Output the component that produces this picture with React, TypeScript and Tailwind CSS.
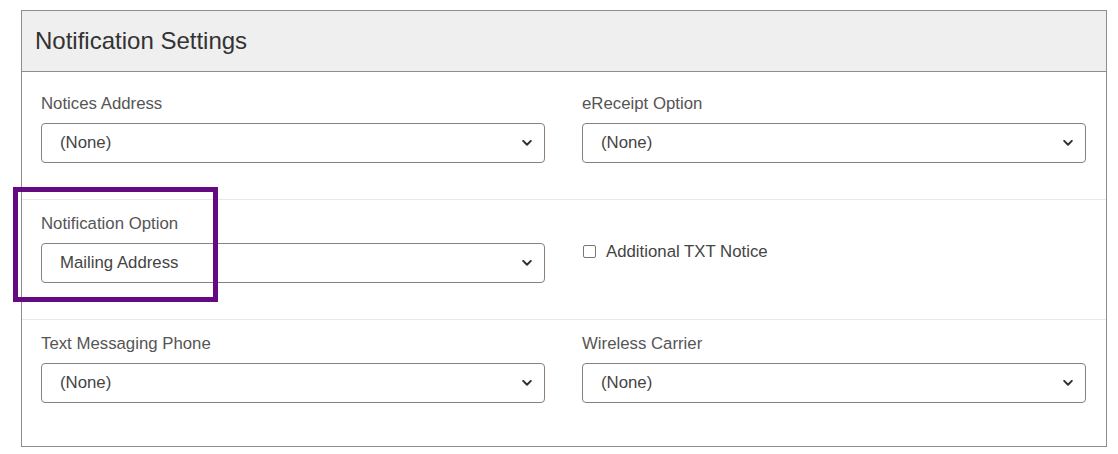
import { ReactNode } from 'react';

const font = { fontFamily: '"Liberation Sans", Arial, sans-serif' };

// 下向きのシェブロン
const Chevron = () => (
  <svg
    className="pointer-events-none absolute right-[13px] top-1/2 -translate-y-1/2"
    width="10"
    height="7"
    viewBox="0 0 10 7"
    fill="none"
  >
    <path d="M1.2 1.4 5 5.2 8.8 1.4" stroke="#333" strokeWidth="2" strokeLinecap="round" strokeLinejoin="round" />
  </svg>
);

const Select = ({ value }: { value: string }) => (
  <div className="relative h-10 w-full">
    <select
      className="h-10 w-full appearance-none rounded-[4px] border border-[#8a8077] bg-white pl-[18px] pr-8 text-[16.8px] text-[#444] outline-none"
      defaultValue={value}
    >
      <option>{value}</option>
    </select>
    <Chevron />
  </div>
);

const Field = ({ label, value }: { label: string; value: string }) => (
  <div className="flex flex-col">
    <label className="mb-[9px] h-5 text-[16.8px] leading-5 text-[#555]">{label}</label>
    <Select value={value} />
  </div>
);

const Row = ({ children, last }: { children: ReactNode; last?: boolean }) => (
  <div className={last ? 'pt-[14px] pb-[36px]' : 'border-b border-[#e9e9e9] pt-[14px] pb-[36px]'}>
    <div className="grid grid-cols-2 gap-[37px] pl-[19px] pr-[20px]">{children}</div>
  </div>
);

export default function App() {
  return (
    <div className="relative h-[454px] w-[1118px] bg-white" style={font}>
      <div className="absolute left-[21px] top-[10px] flex h-[437px] w-[1086px] flex-col border border-[#8c8c8c]">
        {/* ヘッダー */}
        <div className="flex h-[61px] items-center border-b border-[#8c8c8c] bg-[#efefef] pl-[13px]">
          <h2 className="text-[24px] leading-7 text-[#333]">Notification Settings</h2>
        </div>

        <div className="pt-2 pb-[7px]">
          <Row>
            <Field label="Notices Address" value="(None)" />
            <Field label="eReceipt Option" value="(None)" />
          </Row>
          <Row>
            <Field label="Notification Option" value="Mailing Address" />
            <div className="mt-[30px] flex h-[15px] items-center gap-[10px]">
              <input
                type="checkbox"
                className="ml-px h-[13px] w-[13px] appearance-none rounded-[2px] border border-[#767676] bg-white"
              />
              <span className="text-[16.8px] leading-5 text-[#444]">Additional TXT Notice</span>
            </div>
          </Row>
          <Row last>
            <Field label="Text Messaging Phone" value="(None)" />
            <Field label="Wireless Carrier" value="(None)" />
          </Row>
        </div>
      </div>

      {/* ハイライト枠 */}
      <div className="pointer-events-none absolute left-[13px] top-[187px] h-[115px] w-[205px] border-[5px] border-[#660a84]" />
    </div>
  );
}
